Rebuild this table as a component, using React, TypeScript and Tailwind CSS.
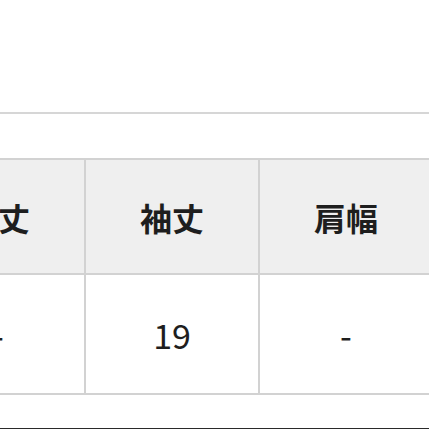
import React from "react";

const headers = ["着丈", "袖丈", "肩幅"];
const values = ["-", "19", "-"];

export default function App() {
  return (
    <div
      className="w-[429px] h-[429px] bg-white overflow-hidden flex flex-col"
      style={{ fontFamily: '"Noto Sans CJK JP", "Noto Sans", sans-serif' }}
    >
      <div className="mt-[112px] h-[2px] bg-[#d6d6d6] shrink-0" />
      <div className="mt-[44px] ml-[-88px] w-[540px] border-t-2 border-b-2 border-[#d2d2d2] shrink-0">
        <div className="flex h-[115px] bg-[#efefef] border-b-2 border-[#d2d2d2]">
          {headers.map((h) => (
            <div
              key={h}
              className="w-[174px] shrink-0 border-r-2 border-[#d2d2d2] flex items-center justify-center text-[32px] font-bold text-[#1e1e1e]"
            >
              {h}
            </div>
          ))}
        </div>
        <div className="flex h-[118px] bg-white">
          {values.map((v, i) => (
            <div
              key={i}
              className="w-[174px] shrink-0 border-r-2 border-[#d2d2d2] flex items-center justify-center text-[34px] text-[#1e1e1e]"
            >
              {v}
            </div>
          ))}
        </div>
      </div>
      <div className="mt-[33px] h-[1px] bg-[#2a2a2a] shrink-0" />
    </div>
  );
}
